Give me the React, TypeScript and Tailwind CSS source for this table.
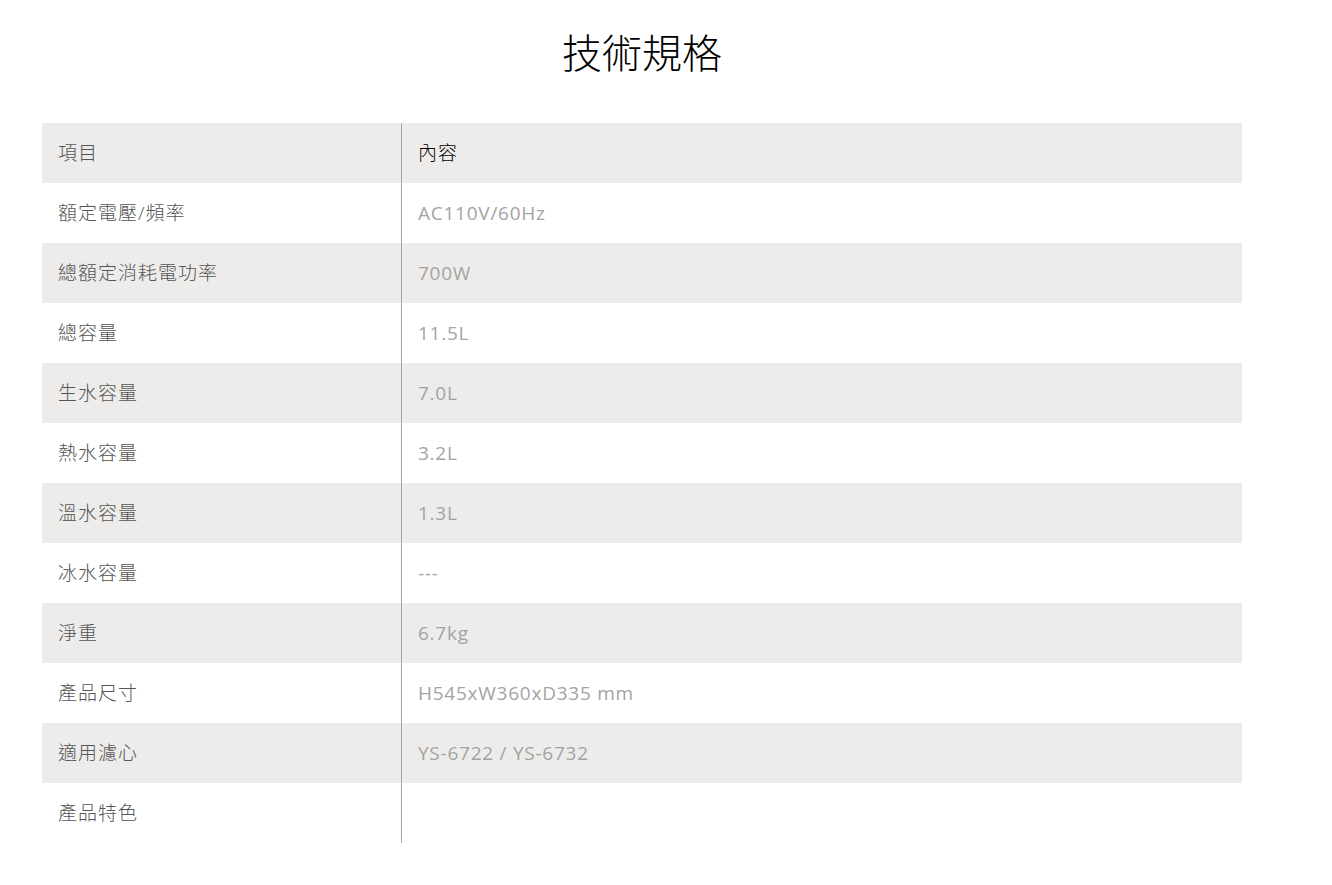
const rows: [string, string][] = [
  ["額定電壓/頻率", "AC110V/60Hz"],
  ["總額定消耗電功率", "700W"],
  ["總容量", "11.5L"],
  ["生水容量", "7.0L"],
  ["熱水容量", "3.2L"],
  ["溫水容量", "1.3L"],
  ["冰水容量", "---"],
  ["淨重", "6.7kg"],
  ["產品尺寸", "H545xW360xD335 mm"],
  ["適用濾心", "YS-6722 / YS-6732"],
  ["產品特色", ""],
]

const SpecRow = ({ label, value, shaded }: { label: string; value: string; shaded: boolean }) => (
  <div className={`flex flex-row h-[60px] ${shaded ? "bg-[#edecea]" : "bg-white"}`}>
    <div className="w-[359px] flex items-center pl-4 tracking-[1px] font-light text-[#555555]">
      {label}
    </div>
    <div className="flex-1 flex items-center pl-4 tracking-[0.75px] font-normal border-l border-[#a3a3a3] text-[#a3a3a3]">
      {value}
    </div>
  </div>
)

export default function App() {
  return (
    <div
      className="min-h-[885px] bg-white pt-[29px]"
      style={{ fontFamily: '"Open Sans", "Noto Sans CJK TC", sans-serif' }}
    >
      <div className="ml-[42px] w-[1200px]">
        <h1 className="text-center text-[40px] leading-[48px] text-black font-light">技術規格</h1>
        <div className="mt-[46px] text-[19px]">
          <div className="flex flex-row h-[60px] bg-[#edecea]">
            <div className="w-[359px] flex items-center pl-4 tracking-[1px] font-light text-[#555555]">
              項目
            </div>
            <div className="flex-1 flex items-center pl-4 tracking-[1px] font-light border-l border-[#a3a3a3] text-black">
              內容
            </div>
          </div>
          {rows.map(([label, value], i) => (
            <SpecRow key={label} label={label} value={value} shaded={i % 2 === 1} />
          ))}
        </div>
      </div>
    </div>
  )
}
